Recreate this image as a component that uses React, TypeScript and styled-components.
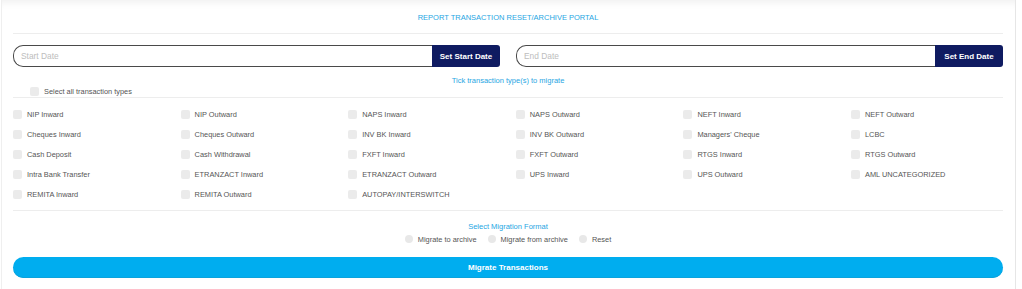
import styled, { createGlobalStyle } from "styled-components";

const GlobalStyle = createGlobalStyle`
  body {
    margin: 0;
    background: #ffffff;
    font-family: "Liberation Sans", Arial, sans-serif;
  }
`;

const TRANSACTION_TYPES = [
  "NIP Inward",
  "NIP Outward",
  "NAPS Inward",
  "NAPS Outward",
  "NEFT Inward",
  "NEFT Outward",
  "Cheques Inward",
  "Cheques Outward",
  "INV BK Inward",
  "INV BK Outward",
  "Managers' Cheque",
  "LCBC",
  "Cash Deposit",
  "Cash Withdrawal",
  "FXFT Inward",
  "FXFT Outward",
  "RTGS Inward",
  "RTGS Outward",
  "Intra Bank Transfer",
  "ETRANZACT Inward",
  "ETRANZACT Outward",
  "UPS Inward",
  "UPS Outward",
  "AML UNCATEGORIZED",
  "REMITA Inward",
  "REMITA Outward",
  "AUTOPAY/INTERSWITCH",
];

const FORMATS = ["Migrate to archive", "Migrate from archive", "Reset"];

// Styled Components
const Card = styled.div`
  box-sizing: border-box;
  width: 1015px;
  min-height: 289px;
  margin-left: 1px;
  padding: 0 12px 0 11px;
  background: #ffffff;
  border-left: 1px solid #efefef;
  border-right: 1px solid #e6e6e6;
  box-shadow: inset 0 9px 8px -7px rgba(0, 0, 0, 0.07);
`;

const Heading = styled.div<{ $top?: number }>`
  margin-top: ${(p) => p.$top ?? 0}px;
  font-size: 7.5px;
  line-height: 8px;
  color: #1fa6e3;
  text-align: center;
`;

const TitleBar = styled.div`
  height: 33px;
  display: flex;
  align-items: center;
  justify-content: center;
  padding-top: 1px;
  box-sizing: border-box;
  font-size: 7.5px;
  color: #1fa6e3;
`;

const Divider = styled.div<{ $top?: number }>`
  height: 1px;
  margin-top: ${(p) => p.$top ?? 0}px;
  background: #ededed;
`;

const DateRow = styled.div`
  display: grid;
  grid-template-columns: 1fr 1fr;
  gap: 16px;
  margin-top: 11px;
  height: 22px;
`;

const DateGroup = styled.div`
  display: flex;
  height: 22px;
`;

const DateInput = styled.input`
  flex: 1;
  min-width: 0;
  box-sizing: border-box;
  height: 22px;
  padding: 0 0 0 7px;
  border: 1px solid #4a4a4a;
  border-right: none;
  border-radius: 10px 0 0 10px;
  font-family: "Liberation Sans", Arial, sans-serif;
  font-size: 8.4px;
  color: #333;
  outline: none;

  &::placeholder {
    color: #bdbdbd;
  }
`;

const DateButton = styled.button`
  width: 68px;
  height: 22px;
  flex: none;
  border: none;
  border-radius: 0 3px 3px 0;
  background: #0f1b61;
  color: #ffffff;
  font-family: "Liberation Sans", Arial, sans-serif;
  font-size: 8px;
  font-weight: bold;
  padding: 0;
`;

const CheckRow = styled.label<{ $indent?: number }>`
  display: flex;
  align-items: center;
  gap: 5px;
  padding-left: ${(p) => p.$indent ?? 0}px;
  font-size: 7.4px;
  color: #555555;
  white-space: nowrap;
`;

const Box = styled.span`
  width: 9px;
  height: 9px;
  flex: none;
  border-radius: 2px;
  background: #ebebeb;
`;

const SelectAll = styled(CheckRow)`
  margin-top: 2px;
  height: 9px;
`;

const TypeGrid = styled.div`
  display: grid;
  grid-template-columns: repeat(6, 167.6px);
  grid-auto-rows: 20px;
  margin-top: 6px;
`;

const RadioRow = styled.div`
  display: flex;
  justify-content: center;
  align-items: center;
  gap: 11px;
  margin-top: 3px;
  height: 10px;
`;

const RadioItem = styled.label`
  display: flex;
  align-items: center;
  gap: 4.5px;
  font-size: 7.4px;
  color: #555555;
`;

const Dot = styled.span`
  width: 8.5px;
  height: 8.5px;
  border-radius: 50%;
  background: #e8e8e8;
`;

const MigrateButton = styled.button`
  display: block;
  width: 100%;
  height: 21px;
  margin-top: 13px;
  border: none;
  border-radius: 11px;
  background: #00adef;
  box-shadow: inset 0 -1px 0 #0aa3dc;
  color: #ffffff;
  font-family: "Liberation Sans", Arial, sans-serif;
  font-size: 8px;
  font-weight: bold;
  padding: 0;
`;

function DateField({ placeholder, action }: { placeholder: string; action: string }) {
  return (
    <DateGroup>
      <DateInput placeholder={placeholder} />
      <DateButton>{action}</DateButton>
    </DateGroup>
  );
}

export default function App() {
  return (
    <>
      <GlobalStyle />
      <Card>
        <TitleBar>REPORT TRANSACTION RESET/ARCHIVE PORTAL</TitleBar>
        <Divider />
        <DateRow>
          <DateField placeholder="Start Date" action="Set Start Date" />
          <DateField placeholder="End Date" action="Set End Date" />
        </DateRow>
        <Heading $top={10}>Tick transaction type(s) to migrate</Heading>
        <SelectAll $indent={17}>
          <Box />
          Select all transaction types
        </SelectAll>
        <Divider $top={1} />
        <TypeGrid>
          {TRANSACTION_TYPES.map((t) => (
            <CheckRow key={t}>
              <Box />
              {t}
            </CheckRow>
          ))}
        </TypeGrid>
        <Divider $top={6} />
        <Heading $top={12}>Select Migration Format</Heading>
        <RadioRow>
          {FORMATS.map((f) => (
            <RadioItem key={f}>
              <Dot />
              {f}
            </RadioItem>
          ))}
        </RadioRow>
        <MigrateButton>Migrate Transactions</MigrateButton>
      </Card>
    </>
  );
}
